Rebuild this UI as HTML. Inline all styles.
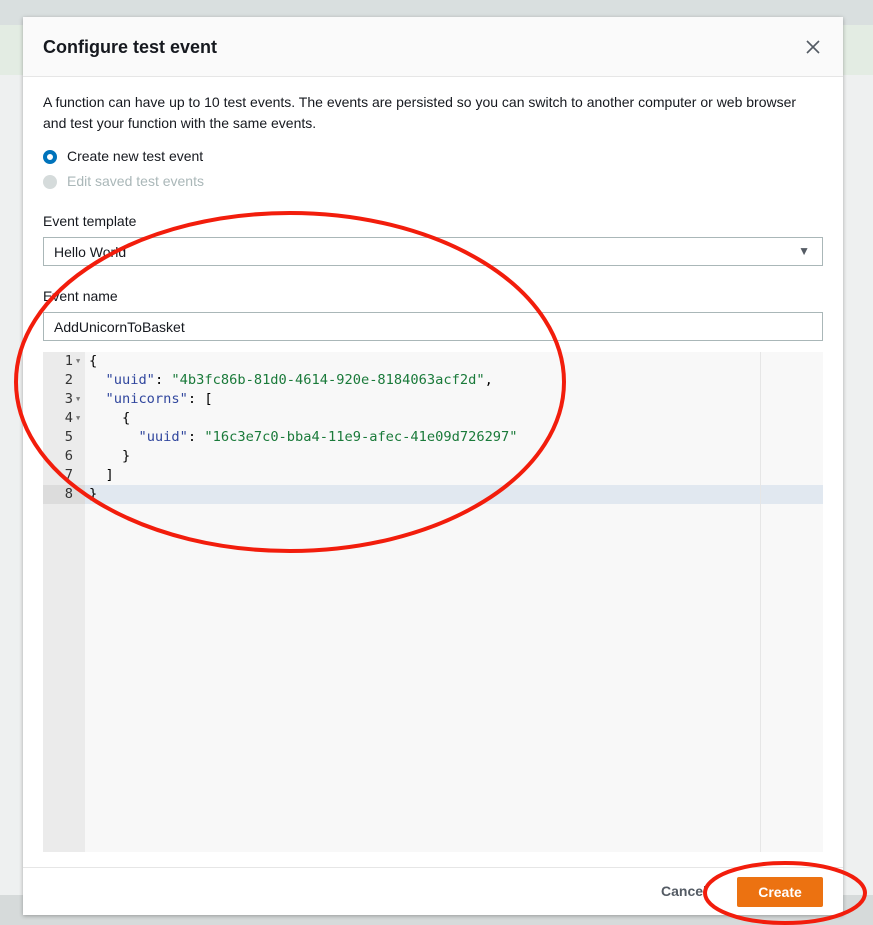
<!DOCTYPE html>
<html><head><style>
body{margin:0;width:873px;height:925px;background:#e9ebeb;font-family:"Liberation Sans",sans-serif;position:relative;overflow:hidden;color:#16191f}
.top{position:absolute;left:0;top:0;width:873px;height:25px;background:#d9dfdf}
.green{position:absolute;left:0;top:25px;width:873px;height:50px;background:#e3ece3}
.white{position:absolute;left:0;top:75px;width:873px;height:820px;background:#eef0f0}
.bot{position:absolute;left:0;top:895px;width:873px;height:30px;background:#d6dada}
.modal{position:absolute;left:23px;top:17px;width:820px;height:898px;background:#fff;box-shadow:0 1px 4px rgba(0,0,0,.3)}
.hdr{height:59px;background:#fafafa;border-bottom:1px solid #e6e6e6;position:relative}
.hdr h1{margin:0;position:absolute;left:20px;top:20px;font-size:18px;font-weight:bold;color:#16191f}
.txt{position:absolute;left:20px;font-size:14px;line-height:21px}
.radio{position:absolute;left:20px;width:14px;height:14px;border-radius:50%;box-sizing:border-box}
.inp{position:absolute;left:20px;width:780px;height:29px;border:1px solid #aab7b8;box-sizing:border-box;font-size:14px;padding:6px 10px}
.ed{position:absolute;left:20px;top:335px;width:780px;height:500px;background:#f8f8f8;font-family:"DejaVu Sans Mono","Liberation Mono",monospace;font-size:13.7px}
.gut{position:absolute;left:0;top:0;width:42px;height:500px;background:#ebebeb}
.ln{position:absolute;left:0;width:30px;text-align:right;color:#333;height:19px;line-height:19px}
.fa{position:absolute;left:33px;font-size:7px;color:#777;line-height:19px}
.code{position:absolute;left:46px;white-space:pre;height:19px;line-height:19px;color:#000}
.k{color:#31479e}.s{color:#1a7a3a}
.foot{position:absolute;left:0;top:850px;width:820px;border-top:1px solid #e6e6e6}
.btn{position:absolute;left:714px;top:860px;width:86px;height:30px;background:#ec7211;color:#fff;font-weight:bold;font-size:14px;text-align:center;line-height:30px;border-radius:2px}
</style></head><body>
<div class="top"></div><div class="green"></div><div class="white"></div><div class="bot"></div>
<div class="modal">
<div class="hdr"><h1>Configure test event</h1>
<svg style="position:absolute;left:783px;top:23px" width="14" height="14"><path d="M1 1L13 13M13 1L1 13" stroke="#545b64" stroke-width="1.6"/></svg></div>
<div class="txt" style="top:75px">A function can have up to 10 test events. The events are persisted so you can switch to another computer or web browser<br>and test your function with the same events.</div>
<div class="radio" style="top:133px;border:4px solid #0073bb"></div>
<div class="txt" style="left:44px;top:129px">Create new test event</div>
<div class="radio" style="top:158px;background:#d5dbdb"></div>
<div class="txt" style="left:44px;top:154px;color:#aab7b8">Edit saved test events</div>
<div class="txt" style="top:194px">Event template</div>
<div class="inp" style="top:220px">Hello World<span style="position:absolute;right:12px;top:6px;font-size:12px;color:#545b64">▼</span></div>
<div class="txt" style="top:269px">Event name</div>
<div class="inp" style="top:295px">AddUnicornToBasket</div>
<div class="ed">
<div class="gut"></div>
<div style="position:absolute;left:42px;top:133px;width:738px;height:19px;background:#e1e8f0"></div>
<div style="position:absolute;left:0;top:133px;width:42px;height:19px;background:#dcdcdc"></div>
<div style="position:absolute;left:717px;top:0;width:1px;height:500px;background:#e6e6e6"></div>
<div class="ln" style="top:0">1</div><div class="ln" style="top:19px">2</div><div class="ln" style="top:38px">3</div><div class="ln" style="top:57px">4</div><div class="ln" style="top:76px">5</div><div class="ln" style="top:95px">6</div><div class="ln" style="top:114px">7</div><div class="ln" style="top:133px">8</div>
<div class="fa" style="top:0">▼</div><div class="fa" style="top:38px">▼</div><div class="fa" style="top:57px">▼</div>
<div class="code" style="top:0">{</div>
<div class="code" style="top:19px">  <span class="k">"uuid"</span>: <span class="s">"4b3fc86b-81d0-4614-920e-8184063acf2d"</span>,</div>
<div class="code" style="top:38px">  <span class="k">"unicorns"</span>: [</div>
<div class="code" style="top:57px">    {</div>
<div class="code" style="top:76px">      <span class="k">"uuid"</span>: <span class="s">"16c3e7c0-bba4-11e9-afec-41e09d726297"</span></div>
<div class="code" style="top:95px">    }</div>
<div class="code" style="top:114px">  ]</div>
<div class="code" style="top:133px">}</div>
</div>
<div class="foot"></div>
<div style="position:absolute;left:638px;top:866px;font-size:14px;font-weight:bold;color:#545b64">Cancel</div>
<div class="btn">Create</div>
</div>
<svg width="873" height="925" style="position:absolute;left:0;top:0">
<ellipse cx="290" cy="382" rx="274" ry="169" fill="none" stroke="#f21d0c" stroke-width="4"/>
<ellipse cx="785" cy="893" rx="80" ry="30" fill="none" stroke="#f21d0c" stroke-width="4"/>
</svg>
</body></html>
